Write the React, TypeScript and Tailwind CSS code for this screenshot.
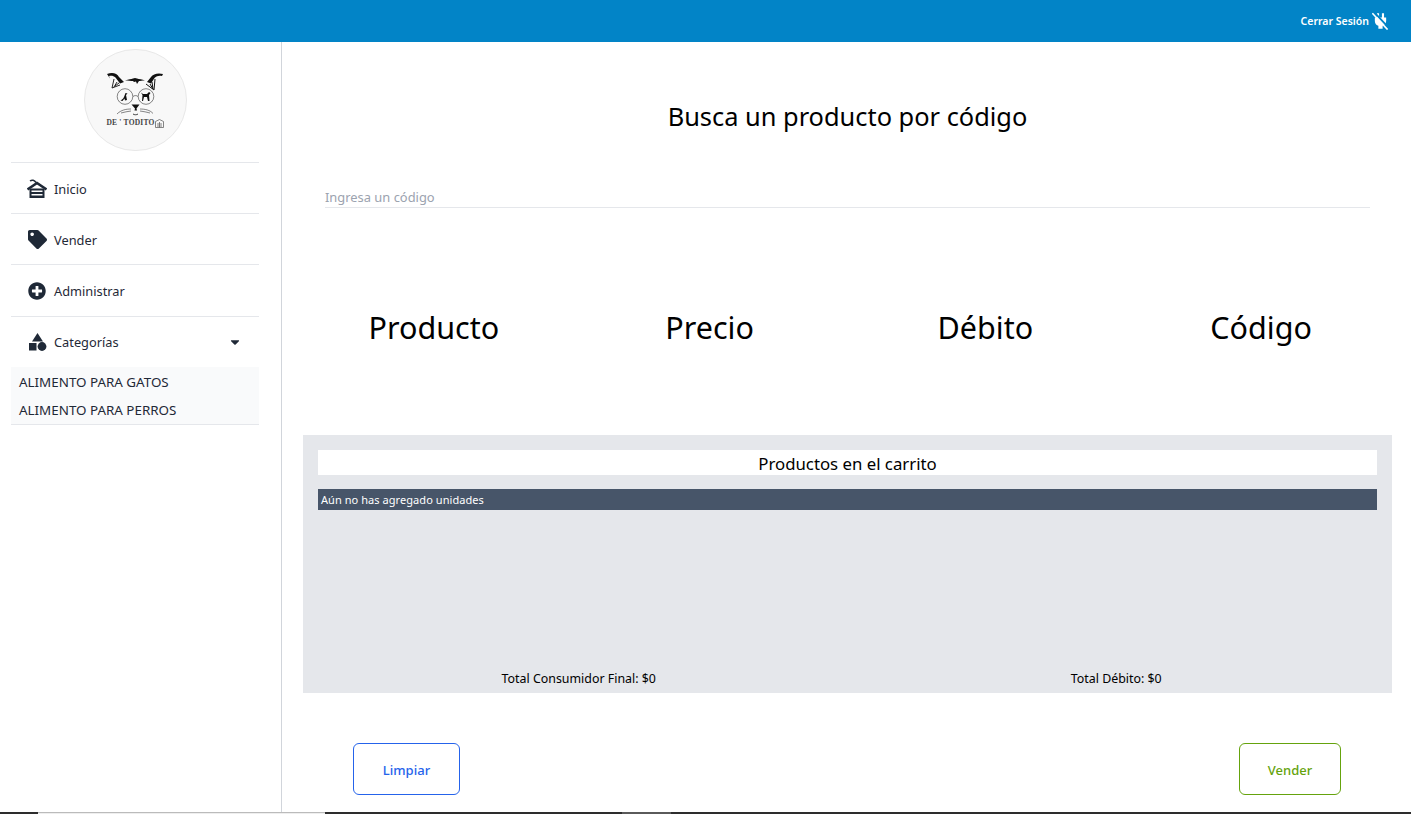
import { FaTag, FaPlusCircle, FaCaretDown } from "react-icons/fa";

function PlugOff() {
  return (
    <svg viewBox="0 0 24 24" className="w-[17px] h-[18px] text-white" fill="currentColor">
      <path d="M7 1h3v7H7zM14 1h3v7h-3zM4 7h16v5c0 3.600-2.300 6-5 6.700V23h-6v-4.300C6.300 18 4 15.600 4 12z" />
      <path d="M3.500 0 24 22" stroke="#0284c7" strokeWidth="2.600" />
      <path d="M.5 1 22 24" stroke="currentColor" strokeWidth="2.400" />
    </svg>
  );
}

function HomeIcon() {
  return (
    <svg viewBox="0 0 20 19" className="w-[20px] h-[19px]" fill="none" stroke="currentColor">
      <path d="M.5 10.500 10 4l9.500 6.500" strokeWidth="2.600" />
      <path d="M3 2C5 .5 7.500 1 9 3.500" strokeWidth="1.500" />
      <path d="M3.500 10v8.500h13V10" strokeWidth="2" />
      <path d="M4 10.500h12M4 14h12M4 17.500h12" strokeWidth="2" />
    </svg>
  );
}

function ShapesIcon() {
  return (
    <svg viewBox="0 0 18 18" className="w-[18px] h-[18px]" fill="currentColor">
      <path d="M3 8.500 8.500 0 14 8.500z" />
      <rect x="0" y="10" width="7.500" height="7.500" />
      <circle cx="13" cy="13.500" r="4.400" />
    </svg>
  );
}

function Logo() {
  return (
    <div className="w-[103px] h-[102px] rounded-full bg-[#f8f8f8] border border-[#e8e8e8] flex flex-col items-center justify-center">
      <svg viewBox="0 0 60 46" className="w-[60px] h-[46px] -mt-[4px]" fill="none" stroke="#111">
        <path d="M2 3c5-2 10-1 12 3l5 5-4 1.500-4.500-6c-2-2-4.500-2-6.500-1.500l1 2.500z" fill="#111" stroke="none" />
        <path d="M58 3c-5-1.500-10 0-12 3l-4 5 4 1.500 3.500-5.500c2-2 4.500-2.500 7.500-2l-1 2z" fill="#111" stroke="none" />
        <path d="M9 8l-2 9 8-3M12 11l-3 5M14 12l-4 3" strokeWidth=".9" />
        <path d="M50 8l-1 11-8-6M47 11l1 7M45 13l3 5" strokeWidth="1" />
        <path d="M20 9.500c4-1 6-1.500 8-2l2-.5 2 .5c2 .5 5 1 8 2-3 0-5 .5-6 .5l-2 3-1-2.500-2 .5-1-1c-2 0-5-.5-8-.5z" fill="#111" stroke="none" />
        <circle cx="20" cy="25.500" r="7.800" strokeWidth=".5" />
        <circle cx="41" cy="25.500" r="7.800" strokeWidth=".5" />
        <path d="M28 25.500c1-1.200 4-1.200 5 0" strokeWidth=".5" />
        <path d="M15.500 29.500c1-1 2.500-1 3.500-3.500l1.500-4 2 .5-1.500 1.500 1 5-2 .5-.5-2-2 2.500z" fill="#111" stroke="none" />
        <path d="M36 21.500l2 1.500h4l2-2 1.500 1-1.500 2 .5 6h-1.500l-1-4h-3l-1 4H37l.5-6z" fill="#111" stroke="none" />
        <path d="M26.500 33.500h8l-3 4 .5 2-2.500 0 .5-2z" fill="#111" stroke="none" />
        <path d="M28 43c1.500 1 3.500 1 5 0" strokeWidth=".8" />
        <path d="M26 38c-5 0-10 1-14 5M26 40c-3 .5-7 1-10 2M35 38c5 0 10 1 13 4.500M35 40c3 .5 7 1 10 2" strokeWidth=".5" />
      </svg>
      <div className="flex items-center text-[7.500px] leading-none font-['Liberation_Serif',serif] font-semibold text-[#444] tracking-[0.2px] mt-[2px] -mb-[2px]">
        <span className="whitespace-pre">DE ' TODITO</span>
        <svg viewBox="0 0 9 9" className="w-[9px] h-[9px]" fill="none" stroke="#666" strokeWidth=".8">
          <path d="M.5 8.500v-6L4.500.5l4 2v6zM2 5h5M2 7h5M4.500 3v5.500" />
        </svg>
      </div>
    </div>
  );
}

function NavRow({ icon, label, h }: { icon: React.ReactNode; label: string; h: string }) {
  return (
    <div className={`${h} border-b border-[#e5e7eb] flex items-center pl-[16px] gap-[7px] text-[12.800px] text-[#1f2937]`}>
      <span className="w-[20px] flex justify-center text-[#1f2937]">{icon}</span>
      <span className="pt-[3px]">{label}</span>
    </div>
  );
}

export default function App() {
  return (
    <div className="w-[1411px] h-[814px] overflow-hidden flex flex-col bg-white font-['Noto_Sans','Open_Sans',sans-serif] relative">
      <header className="h-[42px] shrink-0 bg-[#0284c7] flex items-center justify-end pr-[22px] gap-[3px] text-white">
        <span className="text-[10.500px] font-semibold pt-[2px]">Cerrar Sesión</span>
        <PlugOff />
      </header>
      <div className="flex-1 flex min-h-0">
        <aside className="w-[282px] shrink-0 border-r border-[#d1d5db] pl-[11px] pr-[22px] flex flex-col">
          <div className="h-[121px] border-b border-[#e5e7eb] flex items-start justify-center pt-[7px]">
            <Logo />
          </div>
          <NavRow icon={<HomeIcon />} label="Inicio" h="h-[51px]" />
          <NavRow icon={<FaTag size={19} />} label="Vender" h="h-[51px]" />
          <NavRow icon={<FaPlusCircle size={18} />} label="Administrar" h="h-[52px]" />
          <div className="h-[50px] flex items-center pl-[16px] gap-[7px] text-[12.800px] text-[#1f2937]">
            <span className="w-[20px] flex justify-center pl-[2px]"><ShapesIcon /></span>
            <span className="pt-[1px]">Categorías</span>
            <FaCaretDown size={14} className="ml-auto mr-[17px]" />
          </div>
          <div className="h-[58px] pt-[1px] bg-[#f9fafb] border-b border-[#e5e7eb] text-[13.400px] text-[#1f2937] pl-[8px] flex flex-col">
            <div className="h-[28px] flex items-center">ALIMENTO PARA GATOS</div>
            <div className="h-[28px] flex items-center">ALIMENTO PARA PERROS</div>
          </div>
        </aside>
        <main className="flex-1 min-w-0 flex flex-col">
          <h1 className="text-[25.400px] text-black text-center mt-[55px] leading-[38px] pl-[2px]">Busca un producto por código</h1>
          <div className="ml-[43px] mr-[41px] mt-[53px] h-[20px] border-b border-[#e5e7eb] text-[12.900px] text-[#9ca3af] leading-[18px]">Ingresa un código</div>
          <div className="mt-[98px] h-[42px] grid grid-cols-4 text-[30.500px] text-black text-center leading-[42px] ml-[14px] mr-[12px]">
            <div>Producto</div>
            <div>Precio</div>
            <div>Débito</div>
            <div>Código</div>
          </div>
          <section className="mt-[87px] ml-[21px] mr-[19px] h-[258px] bg-[#e5e7eb] p-[15px] flex flex-col">
            <div className="h-[25px] bg-white text-center text-[16.800px] text-black leading-[28px]">Productos en el carrito</div>
            <div className="mt-[14px] h-[21px] bg-[#475569] text-white text-[11px] px-[3px] leading-[22px] tracking-[0.06px]">Aún no has agregado unidades</div>
            <div className="mt-auto grid grid-cols-2 text-[12.400px] text-black text-center -mb-[9px] leading-[16px]">
              <div className="-translate-x-[4px]">Total Consumidor Final: $0</div>
              <div className="translate-x-[4px]">Total Débito: $0</div>
            </div>
          </section>
          <div className="mt-[50px] pl-[71px] pr-[70px] flex justify-between">
            <button className="w-[107px] h-[52px] border border-[#2563eb] rounded-[6px] text-[#2563eb] text-[13px] font-medium pt-[3px]">Limpiar</button>
            <button className="w-[102px] h-[52px] border border-[#65a30d] rounded-[6px] text-[#65a30d] text-[13px] font-medium pt-[3px]">Vender</button>
          </div>
        </main>
      </div>
      <div className="absolute left-0 right-0 bottom-0 h-[2px] flex bg-[#2d2d2d]">
        <div className="ml-[38px] w-[287px] bg-[#eeeeee] border-t border-[#bbbbbb]" />
        <div className="ml-[297px] w-[49px] bg-[#5a5a5a]" />
      </div>
    </div>
  );
}
